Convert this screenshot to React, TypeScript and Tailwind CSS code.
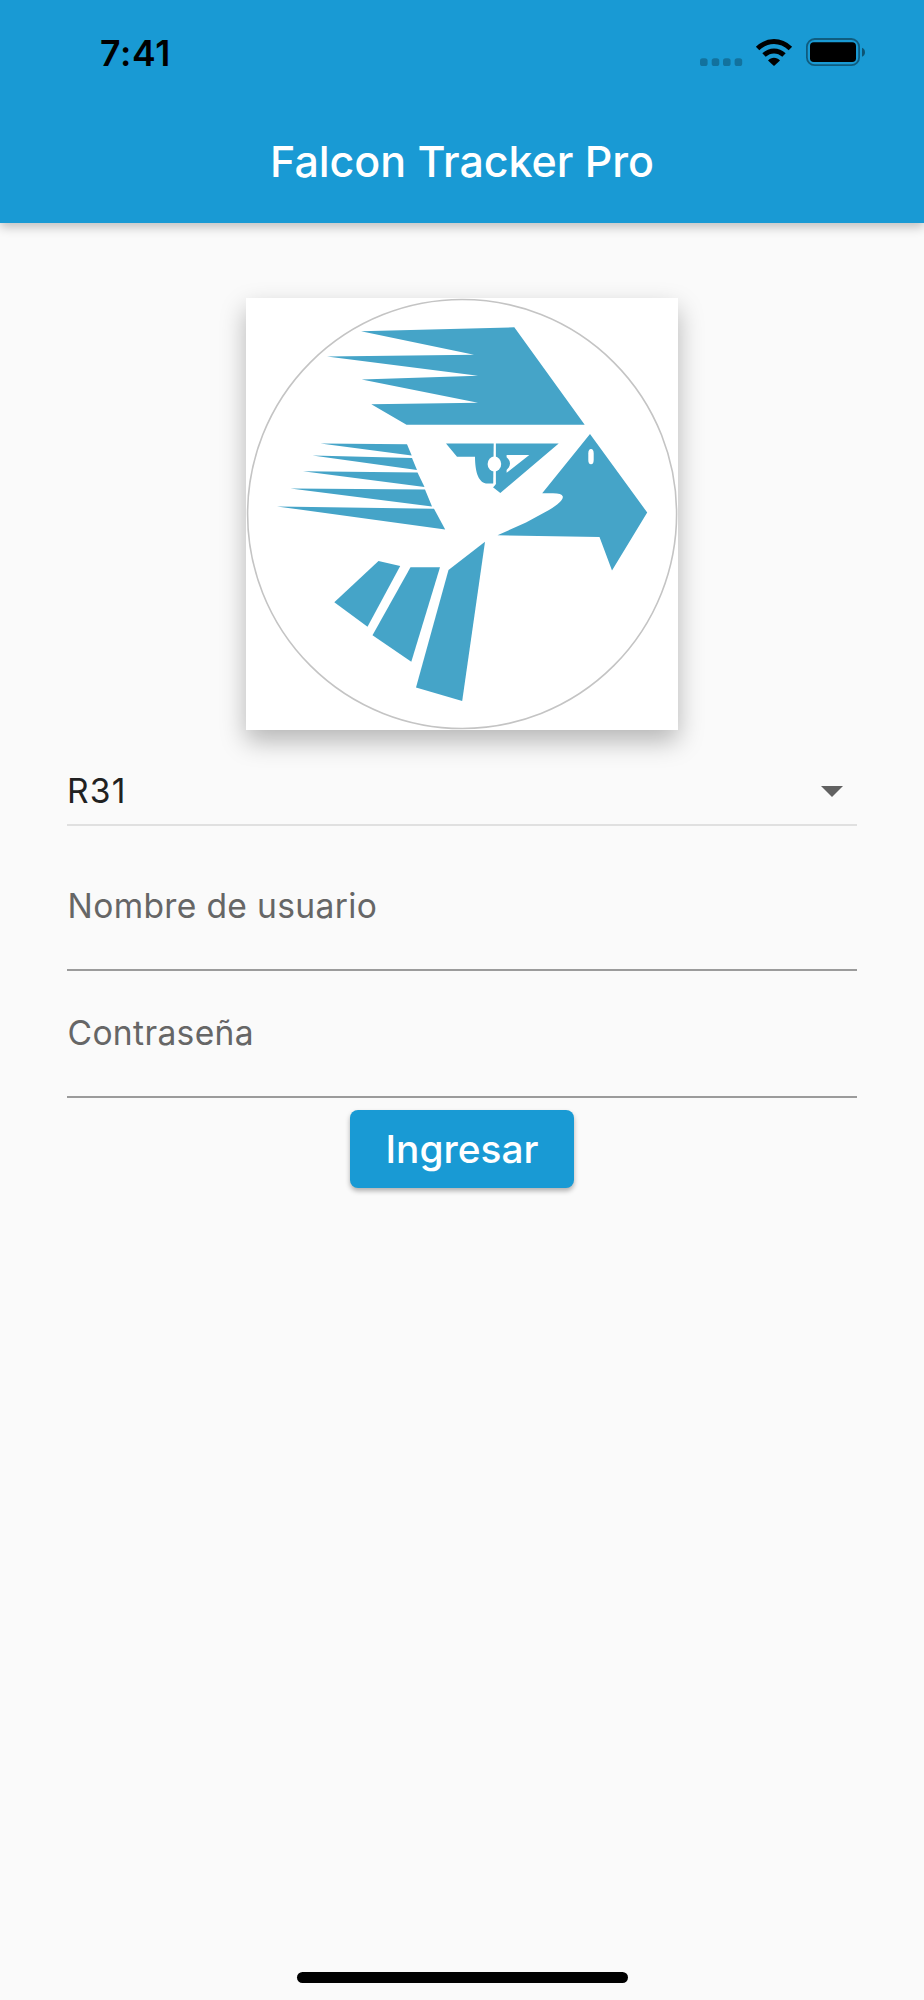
import React from "react";

function StatusIcons() {
  return (
    <svg className="block h-[30px] w-[166px]" viewBox="699 37 166 30">
      <g fill="#000" opacity="0.25">
        <rect x="700" y="58.2" width="7.6" height="7.8" rx="2.6" />
        <rect x="711.7" y="58.2" width="7.6" height="7.8" rx="2.6" />
        <rect x="723" y="58.2" width="7.6" height="7.8" rx="2.6" />
        <rect x="734.6" y="58.2" width="7.6" height="7.8" rx="2.6" />
      </g>
      <g fill="none" stroke="#000" strokeWidth="5">
        <path d="M757.6 48.5C767.4 39.2 780.6 39.2 790.4 48.5" />
        <path d="M764 55C770 49.6 778 49.6 784 55" />
      </g>
      <path d="M768 60.5C771.4 56.9 776.6 56.9 780 60.5L774.6 65.6Q774 66.1 773.4 65.6Z" />
      <rect x="806.9" y="39" width="52.2" height="26.2" rx="7.8" fill="none" stroke="#000" strokeOpacity="0.4" strokeWidth="1.8" />
      <rect x="810" y="42.3" width="46" height="19.7" rx="3.8" />
      <path d="M862 47.8Q865 49 865 52.3Q865 55.6 862 56.8Z" fillOpacity="0.45" />
    </svg>
  );
}

function FalconLogo() {
  return (
    <svg className="block size-[432px]" viewBox="246 298 432 432" role="img" aria-label="Falcon">
      <circle cx="462.1" cy="514" r="214.5" fill="none" stroke="#c4c4c4" strokeWidth="1.6" />
      <g fill="#45a4c8">
        <path d="M361 331.3L514.3 327.3L584.7 424.7H406.5L371.3 404.3L478 402.7L361.7 379.6L478 375.7L327 356.5L474 354.8Z" />
        <path d="M320.5 443.5L407 444.3L411.7 455.5Z" />
        <path d="M312.5 455.5L412 458L417 470Z" />
        <path d="M303 471.3L417.5 472.6L424.5 487Z" />
        <path d="M290.5 488.4L425 489.6L432 506.5Z" />
        <path d="M277 506.4L434 508.8L445.2 529.5Z" />
        <path d="M446 443.5H558.7L500.3 493L493 487.2L495.8 483.5H487.5C479 483.5 475 473 475 456.7H457Z" />
        <path d="M590 434L647.2 512.5L612 570.5L599.5 537L497.5 535.3L526 522.5L549 510Q563.5 501 562.8 496.5Q561.8 493.2 553 493.2H542.2Z" />
        <path d="M378.5 561L400.2 566L367.5 626.7L334.3 602.3Z" />
        <path d="M410.5 567.3H440L411.3 661.8L372.5 635.3Z" />
        <path d="M448.5 570L485 541.7L462.2 701L416 687.5Z" />
      </g>
      <g fill="#fff">
        <path d="M493.7 443H495.9V484L493.2 487.2V484Z" />
        <ellipse cx="494.4" cy="464" rx="6.8" ry="7.6" />
        <path d="M506.6 455H529.3L506.6 472.8V470Q510 467 510 463.6Q510 460 506.6 457.2Z" />
        <rect x="588.3" y="449" width="5.4" height="15.2" rx="2.7" ry="4.5" />
      </g>
    </svg>
  );
}

function Field({ label }: { label: string }) {
  return (
    <div className="flex h-[127.5px] items-center border-b-[2.5px] border-[#9b9b9b] pl-[0.5px] text-[33.6px] tracking-[0.35px] text-[#666]">
      <span className="leading-10">{label}</span>
    </div>
  );
}

export default function App() {
  return (
    <div className="flex h-[2000px] w-[924px] flex-col bg-[#fafafa] font-['Inter',sans-serif]">
      <header className="flex h-[222.5px] flex-col bg-[#199ad4] shadow-[0_4px_10px_rgba(0,0,0,0.24)]">
        <div className="flex h-[102px] items-center justify-between pr-[59px] pl-[100px]">
          <time className="mt-[5px] text-[35.6px] font-semibold leading-10 tracking-[0.7px] text-black">7:41</time>
          <div className="mt-0.5"><StatusIcons /></div>
        </div>
        <h1 className="mt-[33px] text-center text-[43px] font-medium leading-[52px] tracking-[-0.06px] text-white">Falcon Tracker Pro</h1>
      </header>

      <main className="flex grow flex-col px-[67px] pt-[75.5px]">
        <div className="self-center bg-white shadow-[0_11px_24px_rgba(0,0,0,0.28)]">
          <FalconLogo />
        </div>

        <div className="mt-[33px] flex h-[63px] items-center justify-between border-b-2 border-[#e0e0e0] pr-[14.5px] text-[33.6px] text-[#212121]">
          <span className="mb-1.5 leading-10 tracking-[1.2px]">R31</span>
          <svg className="mb-[4px] h-[11px] w-[22px]" viewBox="0 0 22 11"><path d="M0 0H22L11 11Z" fill="#616161" /></svg>
        </div>

        <div className="mt-[17px] flex flex-col">
          <Field label="Nombre de usuario" />
          <Field label="Contraseña" />
        </div>

        <button className="mt-3 h-[78px] w-[224px] self-center rounded-[8px] bg-[#199ad4] pt-px text-[38.8px] font-medium text-white shadow-[0_3px_5px_rgba(0,0,0,0.3)]">
          Ingresar
        </button>
      </main>

      <footer className="flex h-[28.5px] justify-center">
        <div className="h-[11px] w-[331px] rounded-full bg-black" />
      </footer>
    </div>
  );
}
